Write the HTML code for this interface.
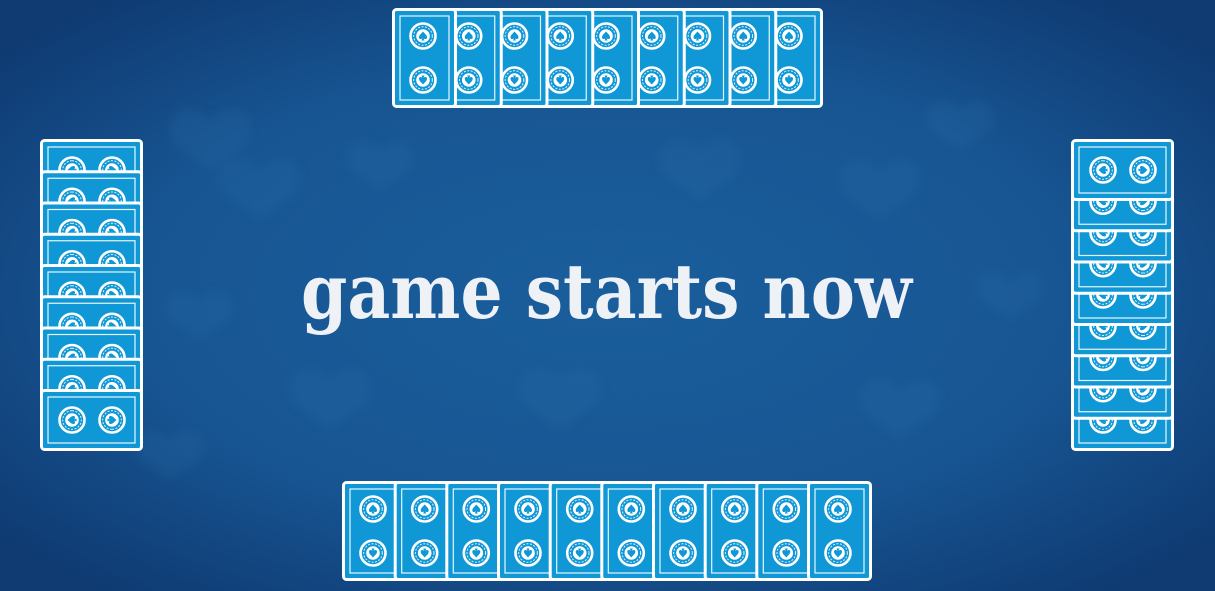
<!DOCTYPE html>
<html><head><meta charset="utf-8"><style>
html,body{margin:0;padding:0;width:1215px;height:591px;overflow:hidden;background:#164f8c}
svg{display:block}
</style></head><body>
<svg width="1215" height="591" viewBox="0 0 1215 591" xmlns="http://www.w3.org/2000/svg">
<defs>
<radialGradient id="bg" cx="50%" cy="50%" r="65%">
<stop offset="0" stop-color="#1a5e9c"/>
<stop offset="0.6" stop-color="#175592"/>
<stop offset="1" stop-color="#0f3a72"/>
</radialGradient>
<filter id="bl"><feGaussianBlur stdDeviation="5"/></filter>
<g id="chipU">
<circle r="12.5" fill="#0f97d6" stroke="#fff" stroke-width="2.6"/>
<circle r="9.3" fill="none" stroke="#dff2fb" stroke-width="1" stroke-dasharray="2 1.5"/>
<circle r="6.8" fill="#fff"/>
<path d="M0,-4.5 C2,-2 4,-1 4,1.5 C4,3.3 1.8,3.5 0.6,2.2 L1.5,4.5 L-1.5,4.5 L-0.6,2.2 C-1.8,3.5 -4,3.3 -4,1.5 C-4,-1 -2,-2 0,-4.5Z" fill="#0f97d6"/>
</g>
<g id="chipD">
<circle r="12.5" fill="#0f97d6" stroke="#fff" stroke-width="2.6"/>
<circle r="9.3" fill="none" stroke="#dff2fb" stroke-width="1" stroke-dasharray="2 1.5"/>
<circle r="6.8" fill="#fff"/>
<path d="M0,4.5 C2,2 4,1 4,-1.5 C4,-3.3 1.8,-3.5 0.6,-2.2 L1.5,-4.5 L-1.5,-4.5 L-0.6,-2.2 C-1.8,-3.5 -4,-3.3 -4,-1.5 C-4,1 -2,2 0,4.5Z" fill="#0f97d6"/>
</g>
<g id="chipL"><use href="#chipU" transform="rotate(-90)"/></g>
<g id="chipR"><use href="#chipU" transform="rotate(90)"/></g>
<g id="vc">
<rect x="1.5" y="1.5" width="62" height="97" rx="3" fill="#0f97d6" stroke="#fff" stroke-width="3"/>
<rect x="8" y="8" width="49" height="84" fill="none" stroke="#e8f6fd" stroke-width="1.2"/>
<use href="#chipU" x="31" y="28"/>
<use href="#chipD" x="31" y="72"/>
</g>
<g id="hc">
<rect x="1.5" y="1.5" width="100" height="59" rx="3" fill="#0f97d6" stroke="#fff" stroke-width="3"/>
<rect x="8" y="8" width="87" height="46" fill="none" stroke="#e8f6fd" stroke-width="1.2"/>
<use href="#chipL" x="32" y="31"/>
<use href="#chipR" x="72" y="31"/>
</g>
</defs>
<rect width="1215" height="591" fill="url(#bg)"/>
<g fill="#2a6ea8" opacity="0.22" filter="url(#bl)">
<path d="M210,120 c-20,-25 -55,-5 -35,25 l35,25 l35,-25 c20,-30 -15,-50 -35,-25z"/>
<path d="M260,170 c-20,-25 -55,-5 -35,25 l35,25 l35,-25 c20,-30 -15,-50 -35,-25z"/>
<path d="M380,150 c-15,-20 -45,-5 -30,20 l30,20 l30,-20 c15,-25 -15,-40 -30,-20z"/>
<path d="M700,150 c-20,-25 -55,-5 -35,25 l35,25 l35,-25 c20,-30 -15,-50 -35,-25z"/>
<path d="M880,170 c-20,-25 -55,-5 -35,25 l35,25 l35,-25 c20,-30 -15,-50 -35,-25z"/>
<path d="M960,110 c-15,-20 -45,-5 -30,20 l30,20 l30,-20 c15,-25 -15,-40 -30,-20z"/>
<path d="M560,380 c-20,-25 -55,-5 -35,25 l35,25 l35,-25 c20,-30 -15,-50 -35,-25z"/>
<path d="M330,380 c-20,-25 -55,-5 -35,25 l35,25 l35,-25 c20,-30 -15,-50 -35,-25z"/>
<path d="M900,390 c-20,-25 -55,-5 -35,25 l35,25 l35,-25 c20,-30 -15,-50 -35,-25z"/>
<path d="M200,300 c-15,-20 -45,-5 -30,20 l30,20 l30,-20 c15,-25 -15,-40 -30,-20z"/>
<path d="M1010,280 c-15,-20 -45,-5 -30,20 l30,20 l30,-20 c15,-25 -15,-40 -30,-20z"/>
<path d="M170,440 c-15,-20 -45,-5 -30,20 l30,20 l30,-20 c15,-25 -15,-40 -30,-20z"/>
</g>
<use href="#vc" x="758" y="8"/>
<use href="#vc" x="712.25" y="8"/>
<use href="#vc" x="666.5" y="8"/>
<use href="#vc" x="620.75" y="8"/>
<use href="#vc" x="575" y="8"/>
<use href="#vc" x="529.25" y="8"/>
<use href="#vc" x="483.5" y="8"/>
<use href="#vc" x="437.75" y="8"/>
<use href="#vc" x="392" y="8"/>
<use href="#vc" x="342" y="481"/>
<use href="#vc" x="393.7" y="481"/>
<use href="#vc" x="445.3" y="481"/>
<use href="#vc" x="497" y="481"/>
<use href="#vc" x="548.7" y="481"/>
<use href="#vc" x="600.3" y="481"/>
<use href="#vc" x="652" y="481"/>
<use href="#vc" x="703.7" y="481"/>
<use href="#vc" x="755.3" y="481"/>
<use href="#vc" x="807" y="481"/>
<use href="#hc" x="40" y="139"/>
<use href="#hc" x="40" y="170.25"/>
<use href="#hc" x="40" y="201.5"/>
<use href="#hc" x="40" y="232.75"/>
<use href="#hc" x="40" y="264"/>
<use href="#hc" x="40" y="295.25"/>
<use href="#hc" x="40" y="326.5"/>
<use href="#hc" x="40" y="357.75"/>
<use href="#hc" x="40" y="389"/>
<use href="#hc" x="1071" y="389"/>
<use href="#hc" x="1071" y="357.75"/>
<use href="#hc" x="1071" y="326.5"/>
<use href="#hc" x="1071" y="295.25"/>
<use href="#hc" x="1071" y="264"/>
<use href="#hc" x="1071" y="232.75"/>
<use href="#hc" x="1071" y="201.5"/>
<use href="#hc" x="1071" y="170.25"/>
<use href="#hc" x="1071" y="139"/>
<text x="301" y="318" font-family="'DejaVu Serif','Liberation Serif',serif" font-weight="bold" font-size="76" fill="#eef1f5" textLength="611" lengthAdjust="spacingAndGlyphs">game starts now</text>
</svg>
</body></html>
